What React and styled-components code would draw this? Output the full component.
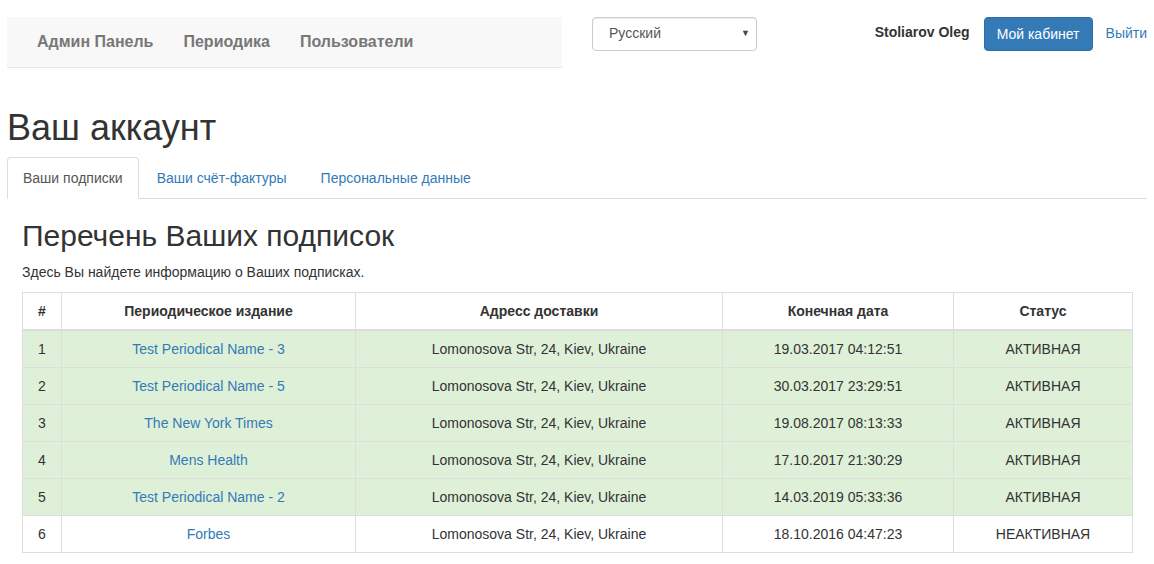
import React from "react";
import styled, { createGlobalStyle } from "styled-components";

const Global = createGlobalStyle`
  html, body { margin: 0; padding: 0; background: #fff; }
  body {
    font-family: "Liberation Sans", Arial, sans-serif;
    font-size: 14px;
    line-height: 1.42857;
    color: #333;
  }
  * { box-sizing: border-box; }
`;

const Container = styled.div`
  width: 1140px;
  margin: 0 auto;
`;

const Header = styled.header`
  display: flex;
  align-items: flex-start;
  padding-top: 17px;
`;

const Navbar = styled.nav`
  width: 555px;
  height: 51px;
  background: #f8f8f8;
  border-bottom: 1px solid #e7e7e7;
  display: flex;
  align-items: center;
  padding-left: 15px;
`;

const NavLink = styled.a`
  font-size: 16px;
  font-weight: bold;
  color: #777;
  padding: 0 15px;
  text-decoration: none;
  line-height: 50px;
`;

const LangSelect = styled.div`
  position: relative;
  margin-left: 30px;
  width: 165px;
  height: 34px;
  border: 1px solid #ccc;
  border-radius: 4px;
  box-shadow: inset 0 1px 1px rgba(0,0,0,.075);
  display: flex;
  align-items: center;
  padding-left: 16px;
  font-size: 14px;
  color: #555;
`;

const Caret = styled.span`
  position: absolute;
  right: 6px;
  top: 9px;
  font-size: 9px;
  color: #444;
`;

const RightGroup = styled.div`
  margin-left: auto;
  display: flex;
  align-items: center;
  height: 34px;
`;

const UserName = styled.span`
  font-weight: bold;
  color: #333;
  margin-right: 14px;
  position: relative;
  top: -1px;
`;

const PrimaryButton = styled.button`
  font-family: inherit;
  font-size: 14px;
  background: #337ab7;
  border: 1px solid #2e6da4;
  color: #fff;
  border-radius: 4px;
  height: 34px;
  padding: 0 12px;
  width: 109px;
`;

const TextLink = styled.a`
  color: #337ab7;
  text-decoration: none;
  margin-left: 13px;
`;

const PageTitle = styled.h1`
  font-size: 36px;
  font-weight: 500;
  line-height: 1.1;
  margin: 40px 0 9px;
  color: #333;
`;

const Tabs = styled.ul`
  display: flex;
  list-style: none;
  margin: 0;
  padding: 0;
  border-bottom: 1px solid #ddd;
`;

const Tab = styled.li`
  margin-right: 2px;
  margin-bottom: -1px;
  padding: 10px 15px;
  line-height: 20px;
  border: 1px solid ${p => (p.$active ? "#ddd" : "transparent")};
  border-bottom-color: ${p => (p.$active ? "#fff" : "transparent")};
  border-radius: 4px 4px 0 0;
  background: ${p => (p.$active ? "#fff" : "transparent")};
  color: ${p => (p.$active ? "#555" : "#337ab7")};
`;

const Pane = styled.section`
  padding: 0 15px;
`;

const SectionTitle = styled.h2`
  font-size: 30px;
  font-weight: 500;
  line-height: 1.1;
  margin: 20px 0 10px;
  color: #333;
`;

const Lead = styled.p`
  margin: 0 0 10px;
  font-size: 14px;
  line-height: 20px;
`;

const Table = styled.table`
  width: 100%;
  border-collapse: collapse;
  border: 1px solid #ddd;
  table-layout: fixed;
`;

const Th = styled.th`
  border: 1px solid #ddd;
  border-bottom-width: 2px;
  padding: 8px;
  line-height: 20px;
  text-align: center;
  font-weight: bold;
`;

const Row = styled.tr`
  background: ${p => (p.$success ? "#dff0d8" : "#fff")};
`;

const Td = styled.td`
  border: 1px solid #ddd;
  padding: 8px;
  line-height: 20px;
  text-align: center;
`;

const Link = styled.a`
  color: #337ab7;
  text-decoration: none;
`;

const rows = [
  ["Test Periodical Name - 3", "19.03.2017 04:12:51", true],
  ["Test Periodical Name - 5", "30.03.2017 23:29:51", true],
  ["The New York Times", "19.08.2017 08:13:33", true],
  ["Mens Health", "17.10.2017 21:30:29", true],
  ["Test Periodical Name - 2", "14.03.2019 05:33:36", true],
  ["Forbes", "18.10.2016 04:47:23", false],
];

export default function App() {
  return (
    <>
      <Global />
      <Container>
        <Header>
          <Navbar>
            <NavLink>Админ Панель</NavLink>
            <NavLink>Периодика</NavLink>
            <NavLink>Пользователи</NavLink>
          </Navbar>
          <LangSelect>
            Русский
            <Caret>▼</Caret>
          </LangSelect>
          <RightGroup>
            <UserName>Stoliarov Oleg</UserName>
            <PrimaryButton>Мой кабинет</PrimaryButton>
            <TextLink>Выйти</TextLink>
          </RightGroup>
        </Header>
        <PageTitle>Ваш аккаунт</PageTitle>
        <Tabs>
          <Tab $active>Ваши подписки</Tab>
          <Tab>Ваши счёт-фактуры</Tab>
          <Tab>Персональные данные</Tab>
        </Tabs>
        <Pane>
          <SectionTitle>Перечень Ваших подписок</SectionTitle>
          <Lead>Здесь Вы найдете информацию о Ваших подписках.</Lead>
          <Table>
            <colgroup>
              <col style={{ width: 39 }} />
              <col style={{ width: 294 }} />
              <col style={{ width: 367 }} />
              <col style={{ width: 231 }} />
              <col style={{ width: 179 }} />
            </colgroup>
            <thead>
              <tr>
                <Th>#</Th>
                <Th>Периодическое издание</Th>
                <Th>Адресс доставки</Th>
                <Th>Конечная дата</Th>
                <Th>Статус</Th>
              </tr>
            </thead>
            <tbody>
              {rows.map(([name, date, active], i) => (
                <Row key={i} $success={active}>
                  <Td>{i + 1}</Td>
                  <Td><Link>{name}</Link></Td>
                  <Td>Lomonosova Str, 24, Kiev, Ukraine</Td>
                  <Td>{date}</Td>
                  <Td>{active ? "АКТИВНАЯ" : "НЕАКТИВНАЯ"}</Td>
                </Row>
              ))}
            </tbody>
          </Table>
        </Pane>
      </Container>
    </>
  );
}
